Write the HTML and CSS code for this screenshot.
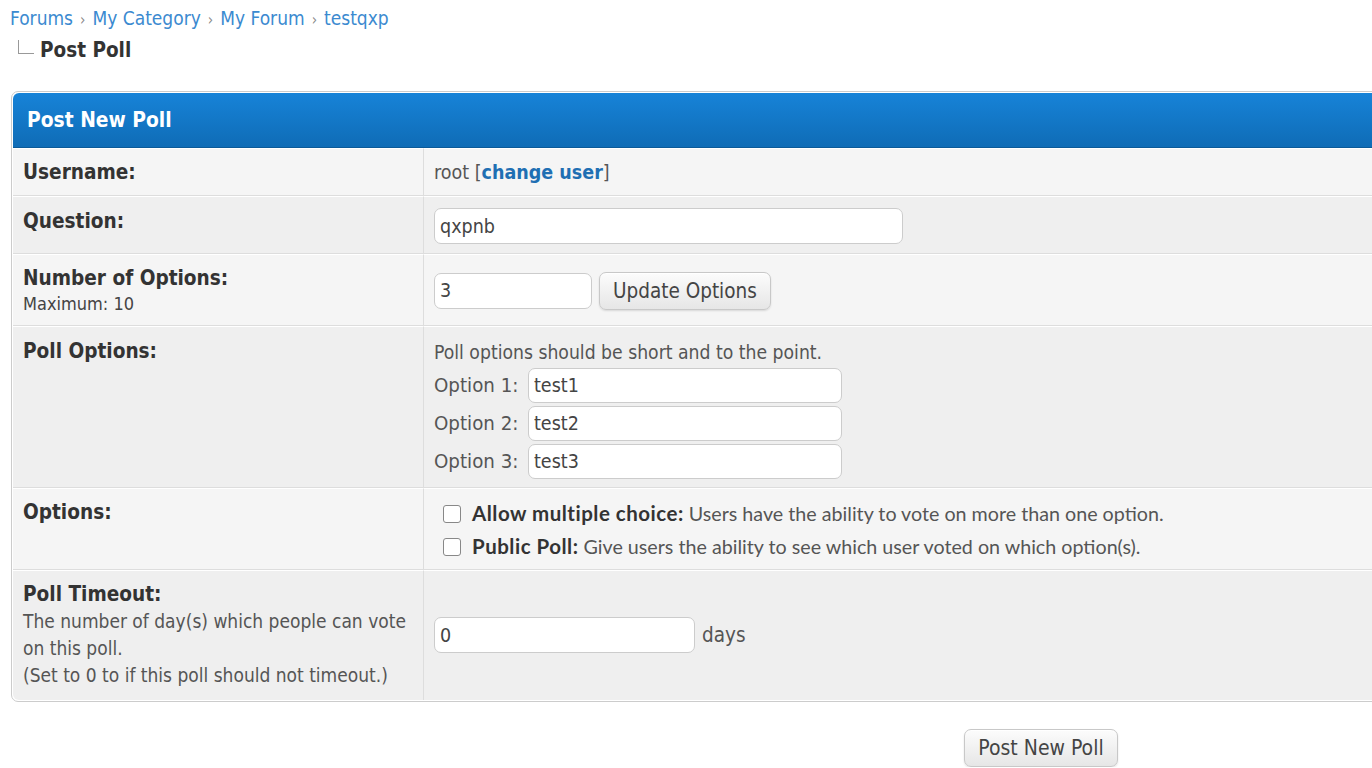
FILE: index.html
```html
<!DOCTYPE html>
<html>
<head>
<meta charset="utf-8">
<title>Post Poll</title>
<link rel="stylesheet" href="styles.css">
</head>
<body>
<div class="navigation">
  <div class="crumbs"><a href="#">Forums</a><span class="sep">›</span><a href="#">My Category</a><span class="sep">›</span><a href="#">My Forum</a><span class="sep">›</span><a href="#">testqxp</a></div>
  <div class="current"><span class="tree"></span><span class="active">Post Poll</span></div>
</div>
<form class="pollform">
  <table class="tborder">
    <tr><td class="thead" colspan="2">Post New Poll</td></tr>
    <tr class="trow1 r-user">
      <td class="lbl"><strong>Username:</strong></td>
      <td class="val">root [<a href="#" class="bold-link">change user</a>]</td>
    </tr>
    <tr class="trow2 r-q">
      <td class="lbl"><strong>Question:</strong></td>
      <td class="val"><input class="textbox q" type="text" value="qxpnb"></td>
    </tr>
    <tr class="trow1 r-num">
      <td class="lbl"><strong>Number of Options:</strong><div class="smallfont">Maximum: 10</div></td>
      <td class="val"><div class="inline"><input class="textbox num" type="text" value="3"><button type="button" class="button">Update Options</button></div></td>
    </tr>
    <tr class="trow2 r-opts">
      <td class="lbl"><strong>Poll Options:</strong></td>
      <td class="val">
        <div class="hint">Poll options should be short and to the point.</div>
        <div class="opt"><span class="optlbl">Option 1:</span><input class="textbox option" type="text" value="test1"></div>
        <div class="opt"><span class="optlbl">Option 2:</span><input class="textbox option" type="text" value="test2"></div>
        <div class="opt"><span class="optlbl">Option 3:</span><input class="textbox option" type="text" value="test3"></div>
      </td>
    </tr>
    <tr class="trow1 r-check">
      <td class="lbl"><strong>Options:</strong></td>
      <td class="val">
        <label class="check"><span class="box"></span><span class="ctext"><strong>Allow multiple choice:</strong> Users have the ability to vote on more than one option.</span></label>
        <label class="check"><span class="box"></span><span class="ctext"><strong>Public Poll:</strong> Give users the ability to see which user voted on which option(s).</span></label>
      </td>
    </tr>
    <tr class="trow2 r-time last">
      <td class="lbl"><strong>Poll Timeout:</strong><div class="desc">The number of day(s) which people can vote on this poll.<br>(Set to 0 to if this poll should not timeout.)</div></td>
      <td class="val"><div class="inline"><input class="textbox days" type="text" value="0"><span class="unit">days</span></div></td>
    </tr>
  </table>
  <div class="submitrow"><button type="button" class="button submit">Post New Poll</button></div>
</form>
</body>
</html>
```
FILE: styles.css
```css
html, body {
  margin: 0;
  padding: 0;
  overflow: hidden;
  background: #fff;
}
body {
  font-family: "DejaVu Sans Condensed", "DejaVu Sans", sans-serif;
  font-stretch: condensed;
  font-size: 19.5px;
  color: #555;
  width: 2090px;
}
a { color: #2a7cc0; text-decoration: none; }

.navigation {
  padding: 5px 0 0 10px;
  height: 91px;
  box-sizing: border-box;
}
.crumbs { font-size: 19px; line-height: 26px; }
.crumbs a { color: #3b8ad0; }
.sep { color: #888; margin: 0 7px; font-size: 15px; }
.current { display: flex; align-items: flex-end; line-height: 30px; margin-top: 2px; }
.tree {
  width: 15px;
  height: 13px;
  border-left: 1px solid #999;
  border-bottom: 1px solid #999;
  margin: 0 6px 11px 8px;
}
.active { font-weight: bold; font-size: 20.5px; color: #333; }

.pollform { margin-left: 11px; width: 2060px; }
.tborder {
  width: 100%;
  border-collapse: separate;
  border-spacing: 0;
  border: 1px solid #ccc;
  border-radius: 7px;
  overflow: hidden;
  background: #fff;
  padding: 1px;
}
.thead {
  background: linear-gradient(#1783d8, #0f6cb6);
  border-bottom: 1px solid #0b5a98;
  color: #fff;
  font-weight: bold;
  font-size: 20.8px;
  height: 55px;
  padding: 0 14px;
  border-radius: 6px 6px 0 0;
  box-sizing: border-box;
}
td { vertical-align: middle; }
.trow1 td { background: #f5f5f5; }
.trow2 td { background: #efefef; }
td.lbl, td.val {
  border-top: 1px solid #fff;
  border-bottom: 1px solid #ddd;
  line-height: 27px;
  padding-top: 9px;
  padding-bottom: 9px;
}
td.lbl {
  width: 389px;
  padding-left: 10px;
  padding-right: 11px;
  vertical-align: top;
  border-right: 1px solid #ddd;
  color: #333;
}
td.val { padding-left: 10px; padding-right: 10px; }

.r-user td.lbl, .r-user td.val { padding-top: 10px; padding-bottom: 9px; }
.r-q td.lbl, .r-q td.val { padding-top: 11px; padding-bottom: 9px; }
.r-num td.lbl, .r-num td.val { padding-top: 10px; padding-bottom: 9px; }
.r-opts td.lbl, .r-opts td.val { padding-top: 11px; padding-bottom: 8px; }
.r-check td.lbl, .r-check td.val { padding-top: 8px; padding-bottom: 6px; }
.r-check td.lbl { padding-top: 10px; }
.r-time td.lbl, .r-time td.val { padding-top: 10px; padding-bottom: 11px; }

.last td.lbl, .last td.val { border-bottom: none; }
.last td.lbl { border-bottom-left-radius: 6px; }
.lbl strong { font-size: 20.6px; color: #333; }
.bold-link { font-weight: bold; color: #1f6fb3; }

.smallfont { font-size: 18px; line-height: 24px; color: #444; }
.desc { font-size: 19px; line-height: 27px; color: #555; }

.textbox {
  font-family: inherit;
  font-size: 19.5px;
  color: #444;
  background: #fff;
  border: 1px solid #ccc;
  border-radius: 7px;
  height: 36px;
  box-sizing: border-box;
  padding: 3px 5px;
  outline: none;
}
.q { width: 469px; display: block; }
.num { width: 158px; }
.days { width: 261px; }
.option { width: 314px; height: 35px; }

.inline { display: flex; align-items: center; }
.button {
  font-family: inherit;
  font-size: 20.5px;
  color: #444;
  background: linear-gradient(#fcfcfc, #e6e6e6);
  border: 1px solid #c8c8c8;
  border-radius: 7px;
  box-shadow: 0 1px 0 #fff inset, 0 1px 2px rgba(0,0,0,.12);
  height: 38px;
  padding: 0 13px;
  margin-left: 7px;
}
.unit { margin-left: 7px; font-size: 20.5px; }

.hint { font-size: 19.2px; line-height: 30px; }
.opt { display: flex; align-items: center; margin-top: 3px; }
.hint + .opt { margin-top: 0; }
.optlbl { width: 94px; font-size: 20.3px; }

.check { display: flex; align-items: center; height: 33px; }
.box {
  width: 16px;
  height: 16px;
  border: 1px solid #888;
  border-radius: 3px;
  background: #fff;
  margin: 0 11px 0 9px;
}
.ctext {
  font-family: "Lato", "Liberation Sans", sans-serif;
  font-stretch: normal;
  font-size: 19.7px;
  color: #555;
}
.ctext strong { color: #333; font-size: 20.5px; letter-spacing: 0.5px; }

.submitrow { text-align: center; padding-top: 27px; }
.submit { margin: 0; padding: 0 13px; font-size: 21px; }
```
